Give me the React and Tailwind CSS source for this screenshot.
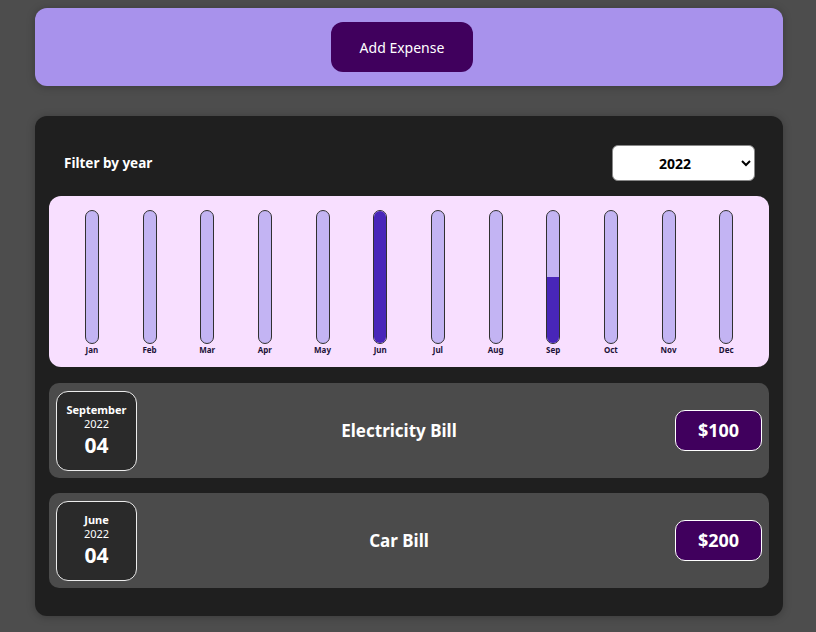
const months = [
    { label: "Jan", value: 0 },
    { label: "Feb", value: 0 },
    { label: "Mar", value: 0 },
    { label: "Apr", value: 0 },
    { label: "May", value: 0 },
    { label: "Jun", value: 200 },
    { label: "Jul", value: 0 },
    { label: "Aug", value: 0 },
    { label: "Sep", value: 100 },
    { label: "Oct", value: 0 },
    { label: "Nov", value: 0 },
    { label: "Dec", value: 0 },
];

const expenses = [
    { month: "September", year: "2022", day: "04", title: "Electricity Bill", amount: "$100" },
    { month: "June", year: "2022", day: "04", title: "Car Bill", amount: "$200" },
];

const ChartBar = ({ label, value, max }) => {
    const fill = max > 0 ? Math.round((value / max) * 100) + "%" : "0%";
    return (
        <div className="flex flex-1 flex-col items-center">
            <div className="flex h-[134px] w-[14px] flex-col justify-end overflow-hidden rounded-full border border-[#313131] bg-[#c3b4f3]">
                <div className="w-full bg-[#4826b9]" style={{ height: fill }}></div>
            </div>
            <span className="mt-[1px] text-[8px] font-bold leading-[10px] text-[#1c1238]">
                {label}
            </span>
        </div>
    );
};

const ExpenseItem = ({ item }) => {
    return (
        <div className="flex h-[95px] items-center rounded-[10px] bg-[#4b4b4b] px-[7px]">
            <div className="flex h-[80px] w-[81px] shrink-0 flex-col items-center justify-center rounded-[12px] border border-[#ececec] bg-[#2a2a2a] text-white">
                <div className="text-[11px] font-bold leading-[14px]">{item.month}</div>
                <div className="text-[11px] leading-[14px]">{item.year}</div>
                <div className="text-[21px] font-bold leading-[28px]">{item.day}</div>
            </div>
            <h2 className="flex-1 pr-[14px] text-center text-[17px] font-bold text-white">
                {item.title}
            </h2>
            <div className="flex h-[41px] w-[87px] items-center justify-center rounded-[10px] border border-white bg-[#40005d] text-[18px] font-bold text-white">
                {item.amount}
            </div>
        </div>
    );
};

const App = () => {
    const max = Math.max(...months.map((m) => m.value));
    return (
        <div
            className="min-h-[632px] bg-[#4d4d4d] pt-[8px]"
            style={{ fontFamily: '"Noto Sans", "Open Sans", sans-serif' }}
        >
            <div className="ml-[35px] flex w-[748px] justify-center rounded-[12px] bg-[#a892ec] py-[14px] pr-[14px] shadow-[0_1px_8px_rgba(0,0,0,0.25)]">
                <button className="h-[50px] w-[142px] rounded-[12px] bg-[#40005d] text-[14px] text-white">
                    Add Expense
                </button>
            </div>

            <div className="ml-[35px] mt-[30px] w-[748px] rounded-[12px] bg-[#1f1f1f] p-[14px] pb-[28px] shadow-[0_1px_8px_rgba(0,0,0,0.25)]">
                <div className="my-[15px] flex items-center justify-between pl-[15px] pr-[14px] text-white">
                    <label className="text-[13.5px] font-bold">Filter by year</label>
                    <select
                        defaultValue="2022"
                        className="h-[36px] w-[143px] rounded-[6px] border border-[#888] bg-white pl-[42px] text-[14px] font-bold text-black"
                    >
                        <option>2022</option>
                        <option>2021</option>
                        <option>2020</option>
                        <option>2019</option>
                    </select>
                </div>

                <div className="flex h-[171px] rounded-[12px] bg-[#f8dfff] px-[14px] pt-[14px]">
                    {months.map((m) => (
                        <ChartBar key={m.label} label={m.label} value={m.value} max={max} />
                    ))}
                </div>

                <div className="mt-[16px] flex flex-col gap-[15px]">
                    {expenses.map((item, index) => (
                        <ExpenseItem key={index} item={item} />
                    ))}
                </div>
            </div>
        </div>
    );
};

export default App;
